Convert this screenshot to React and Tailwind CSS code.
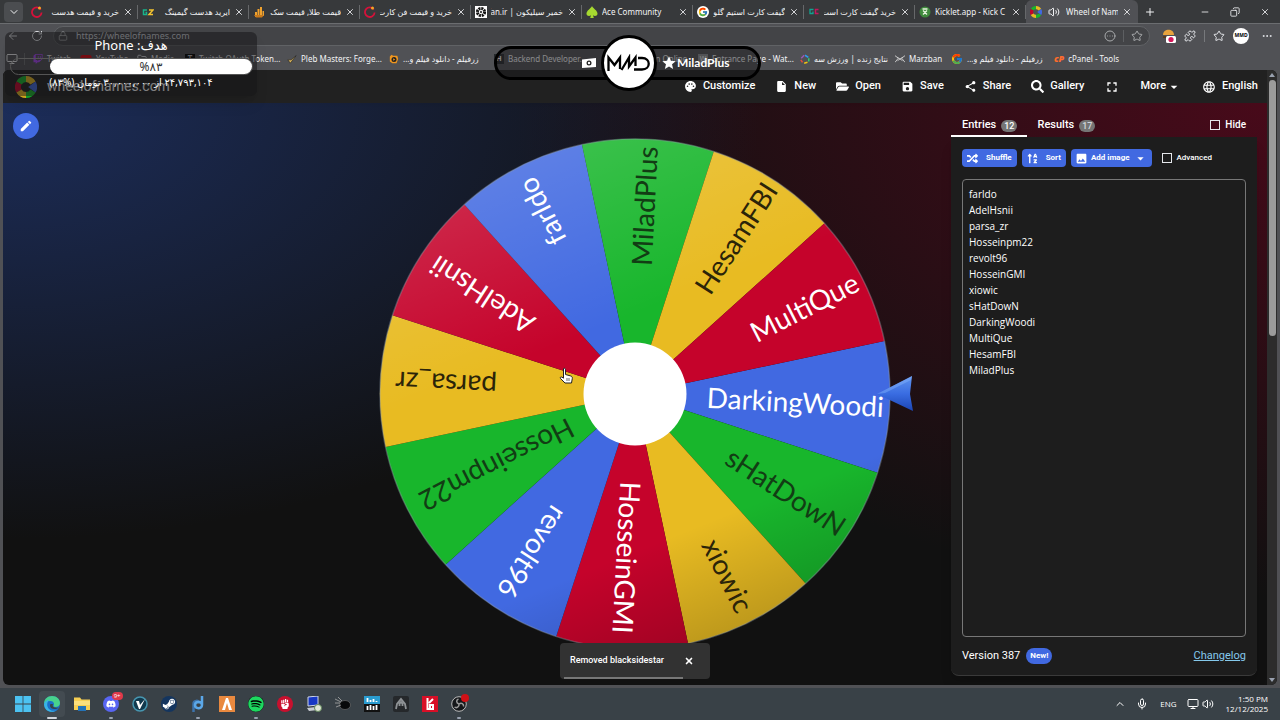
import React, { useState } from 'react';
import { FaDiscord, FaFistRaised, FaFolderOpen, FaRandom, FaSearch, FaSortAlphaUp, FaSpotify, FaSteamSymbol, FaTwitch, FaYoutube } from 'react-icons/fa';
import { FcGoogle } from 'react-icons/fc';
import { MdArrowDropDown, MdEdit, MdFullscreen, MdImage, MdInsertDriveFile, MdLanguage, MdPalette, MdSave, MdShare, MdStar } from 'react-icons/md';
import { ArrowLeft, ChevronDown, ChevronUp, CircleEllipsis, Copy, Ellipsis, Folder, Lock, Mic, Minus, Monitor, Plus, Puzzle, RotateCw, Star, Volume2, X } from 'lucide-react';

const RED = '#c5032b';
const BLUE = '#4169e1';
const GREEN = '#18b62c';
const YELLOW = '#e8bb22';

const names = [
    'farldo', 'AdelHsnii', 'parsa_zr', 'Hosseinpm22', 'revolt96', 'HosseinGMI',
    'xiowic', 'sHatDowN', 'DarkingWoodi', 'MultiQue', 'HesamFBI', 'MiladPlus'
];

// clockwise, starting from the slice under the pointer
const slices = [
    { name: 'DarkingWoodi', color: BLUE, text: '#fff', end: 249 },
    { name: 'sHatDowN', color: GREEN, text: '#123d14', end: 248 },
    { name: 'xiowic', color: YELLOW, text: '#2b2409', end: 243 },
    { name: 'HosseinGMI', color: RED, text: '#fff', end: 240 },
    { name: 'revolt96', color: BLUE, text: '#fff', end: 240 },
    { name: 'Hosseinpm22', color: GREEN, text: '#123d14', end: 240 },
    { name: 'parsa_zr', color: YELLOW, text: '#2b2409', end: 240 },
    { name: 'AdelHsnii', color: RED, text: '#fff', end: 241 },
    { name: 'farldo', color: BLUE, text: '#fff', end: 241 },
    { name: 'MiladPlus', color: GREEN, text: '#123d14', end: 248 },
    { name: 'HesamFBI', color: YELLOW, text: '#2b2409', end: 249 },
    { name: 'MultiQue', color: RED, text: '#fff', end: 249 }
];

const point = (deg, r) => {
    const a = (deg * Math.PI) / 180;
    return `${(r * Math.cos(a)).toFixed(2)} ${(r * Math.sin(a)).toFixed(2)}`;
};

const Wheel = () => (
    <svg viewBox="-256 -256 512 512" className="w-full max-w-[512px] overflow-visible">
        <defs>
            <linearGradient id="shine" x1="0.2" y1="0" x2="0.6" y2="1">
                <stop offset="0" stopColor="#fff" stopOpacity="0.18" />
                <stop offset="0.4" stopColor="#fff" stopOpacity="0" />
                <stop offset="0.8" stopColor="#000" stopOpacity="0" />
                <stop offset="1" stopColor="#000" stopOpacity="0.18" />
            </linearGradient>
            <linearGradient id="pointer" x1="0" y1="0" x2="0" y2="1">
                <stop offset="0" stopColor="#5f95ef" />
                <stop offset="0.5" stopColor="#3a6de2" />
                <stop offset="1" stopColor="#1b45b4" />
            </linearGradient>
        </defs>
        {slices.map((slice, i) => {
            const mid = 3 + i * 30;
            return <path key={slice.name} fill={slice.color} d={`M0 0L${point(mid - 15, 255)}A255 255 0 0 1 ${point(mid + 15, 255)}Z`} />;
        })}
        <circle r="255" fill="url(#shine)" />
        <circle r="255" fill="none" stroke="#8f9aa5" strokeOpacity="0.4" strokeWidth="1.5" />
        {slices.map((slice, i) => (
            <text
                key={slice.name}
                x={slice.end}
                y="10"
                textAnchor="end"
                fontSize="28"
                fill={slice.text}
                className="font-['Lato']"
                transform={`rotate(${3 + i * 30})`}
            >
                {slice.name}
            </text>
        ))}
        <circle r="51.5" fill="#fff" />
        <path d="M242 0L277 -18L275 0L278 17Z" fill="url(#pointer)" />
        <path d="M242 0L277 -18L276 -14L250 -1Z" fill="#8db8ff" fillOpacity="0.4" />
        <g transform="translate(-76 -27)">
            <path d="M4.500 1.500c1-.6 2 0 2 1v5l5 1.400c1.500.5 2 1.300 1.800 2.600l-.8 4.500H6L1.500 11.500c-.8-1 .3-2 1.500-1.300l1.500 1z" fill="#fff" stroke="#222" strokeWidth="1" />
            <path d="M8 11v3M10 11v3" stroke="#222" strokeWidth="0.7" />
        </g>
    </svg>
);

const WheelLogo = ({ className }) => (
    <svg viewBox="0 0 20 20" className={className}>
        <path d="M10 0A10 10 0 0 0 1.300 5L6 7.700A4.600 4.600 0 0 1 10 5.400Z" fill="#18b62c" />
        <path d="M1.300 5A10 10 0 0 0 1.300 15L6 12.300A4.600 4.600 0 0 1 6 7.700Z" fill="#c5032b" />
        <path d="M1.300 15A10 10 0 0 0 10 20V14.600A4.600 4.600 0 0 1 6 12.300Z" fill="#e8bb22" />
        <path d="M10 20A10 10 0 0 0 18.700 15L14 12.300A4.600 4.600 0 0 1 10 14.600Z" fill="#18b62c" />
        <path d="M10 0A10 10 0 0 1 18.700 5L14 7.700A4.600 4.600 0 0 0 10 5.400Z" fill="#e8bb22" />
        <path d="M18.700 5A10 10 0 0 1 18.700 15L12 10Z" fill="#4169e1" />
    </svg>
);

const DigiIcon = () => (
    <svg viewBox="0 0 12 12" className="size-3">
        <path d="M9.800 3.500A4.800 4.800 0 1 0 10.600 6.500" fill="none" stroke="#d4123a" strokeWidth="1.800" />
        <circle cx="8.500" cy="2" r="1.500" fill="#f5a623" />
    </svg>
);

const GzIcon = () => (
    <svg viewBox="0 0 12 12" className="size-3">
        <path d="M5 4H1.500v4.500H4.500V6.500H3.500" fill="none" stroke="#19b38b" strokeWidth="1.500" />
        <path d="M7 4h4L7 8.500h4" fill="none" stroke="#f2c230" strokeWidth="1.500" />
    </svg>
);

const BarsIcon = () => (
    <svg viewBox="0 0 12 12" className="size-3">
        <path d="M2 6h2v5H2zM4.500 3h2v8h-2zM7 1h2v10H7zM9.500 5h1.500v5H9.500z" fill="#f0a22e" />
        <path d="M1 9h10l-2 2.500H3z" fill="#c9791a" />
    </svg>
);

const FanIcon = () => (
    <svg viewBox="0 0 12 12" className="size-3">
        <rect width="12" height="12" fill="#fff" />
        <circle cx="6" cy="6" r="3.600" fill="none" stroke="#111" strokeWidth="3" strokeDasharray="2 0.800" />
        <circle cx="6" cy="6" r="1" fill="#111" />
    </svg>
);

const SpadeIcon = () => (
    <svg viewBox="0 0 12 12" className="size-3">
        <path d="M6 0C7 2.500 11.800 4.500 11.500 8c-.2 2-3 2.600-4.500 1.200L7.800 12H4.200L5 9.200C3.500 10.600.7 10 .5 8 .2 4.500 5 2.500 6 0z" fill="#a6d930" />
    </svg>
);

const GcIcon = () => (
    <svg viewBox="0 0 12 12" className="size-3">
        <path d="M5.500 3.500H2v4h3V5.500" fill="none" stroke="#12a391" strokeWidth="1.300" />
        <path d="M10.500 3.500H7.500v4h3" fill="none" stroke="#c2185b" strokeWidth="1.500" />
    </svg>
);

const KickIcon = () => (
    <svg viewBox="0 0 12 12" className="size-3">
        <circle cx="6" cy="6" r="5.500" fill="#3f8a3c" />
        <path d="M3.500 3h5M4 4.500l4 4M8 4.500l-4 4" stroke="#e8f5e0" strokeWidth="1.300" />
    </svg>
);

const FilmIcon = () => (
    <svg viewBox="0 0 12 12" className="size-2.5">
        <path d="M1 3l2-2 2 1h5l1 4-2 5H4L1 9z" fill="#f0961e" />
        <circle cx="6" cy="6.500" r="3" fill="#222" />
        <path d="M5 5l2.500 1.500L5 8z" fill="#f0961e" />
    </svg>
);

const tabs = [
    { title: 'خرید و قیمت هدست', rtl: true, icon: <DigiIcon /> },
    { title: 'ایرید هدست گیمینگ', rtl: true, icon: <GzIcon /> },
    { title: 'قیمت طلا, قیمت سک', rtl: true, icon: <BarsIcon /> },
    { title: 'خرید و قیمت فن کارت', rtl: true, icon: <DigiIcon /> },
    { title: 'خمیر سیلیکون | fan.ir', rtl: true, icon: <FanIcon /> },
    { title: 'Ace Community', icon: <SpadeIcon /> },
    { title: 'گیفت کارت استیم گلو', rtl: true, icon: <span className="flex rounded-full bg-white p-px"><FcGoogle className="size-2.5" /></span> },
    { title: 'خرید گیفت کارت است', rtl: true, icon: <GcIcon /> },
    { title: 'Kicklet.app - Kick C', icon: <KickIcon /> }
];

const bookmarks = [
    { title: 'Twitch', width: 'w-[47px]', icon: <FaTwitch className="size-2.5 text-purple-500" /> },
    { title: 'YouTube', width: 'w-[57px]', icon: <FaYoutube className="size-3 text-red-600" /> },
    { title: 'Media', width: 'w-[48px]', icon: <Folder className="size-2.5" /> },
    { title: 'Twitch OAuth Token...', width: 'w-[102px]', icon: <span className="size-2.5 bg-black text-center font-serif text-[8px] leading-[10px]">T</span> },
    {
        title: 'Pleb Masters: Forge...', width: 'w-[102px]',
        icon: <svg viewBox="0 0 12 12" className="size-2.5"><path d="M1 7l3 4 7-9-6 5z" fill="#d9b45b" stroke="#222" strokeWidth="0.800" /></svg>
    },
    { title: 'زرفیلم - دانلود فیلم و...', rtl: true, width: 'w-[105px]', icon: <FilmIcon /> },
    { title: 'Backend Developer...', width: 'w-[105px]', icon: <span className="size-2.5 bg-[#26292c] text-center text-[7px] leading-[10px] font-bold">H</span> },
    { title: 'Learn Online', width: 'w-[99px]', icon: <span className="w-9" /> },
    { title: 'Entrance Page - Wat...', width: 'w-[102px]', icon: <span className="size-2.5 bg-[#8b8d90] text-center text-[7px] leading-[10px]">W</span> },
    {
        title: 'نتایج زنده | ورزش سه', rtl: true, width: 'w-[95px]',
        icon: (
            <svg viewBox="0 0 12 12" className="size-2.5" fill="none" strokeWidth="1.800">
                <path d="M6 1.500L10 4" stroke="#2a9df4" /><path d="M10.500 5v4" stroke="#2ecc71" /><path d="M9 10l-4 1" stroke="#f1c40f" /><path d="M3 10L1 7" stroke="#e74c3c" /><path d="M1.500 5L5 1.500" stroke="#9b59b6" />
            </svg>
        )
    },
    {
        title: 'Marzban', width: 'w-[56px]',
        icon: <svg viewBox="0 0 12 12" className="size-2.5" stroke="#ddd" fill="none"><path d="M0 2l4 3-4 5M12 2L8 5l4 5M3 4l6 4M9 4L3 8" /></svg>
    },
    { title: 'زرفیلم - دانلود فیلم و...', rtl: true, width: 'w-[103px]', icon: <FcGoogle className="size-3" /> },
    { title: 'cPanel - Tools', width: 'w-[68px]', icon: <span className="text-[9px] font-black text-[#ff6c2c] italic">cP</span> }
];

const menu = [
    { label: 'Customize', Icon: MdPalette },
    { label: 'New', Icon: MdInsertDriveFile },
    { label: 'Open', Icon: FaFolderOpen },
    { label: 'Save', Icon: MdSave },
    { label: 'Share', Icon: MdShare },
    { label: 'Gallery', Icon: FaSearch }
];

const BrowserTabs = () => (
    <div className="flex h-[23px] items-center bg-[#37393b] text-[8px] text-gray-100">
        <button aria-label="Tab actions" className="ml-1 flex h-5 w-[19px] shrink-0 items-center justify-center rounded bg-[#4b4d50]">
            <ChevronDown className="size-3" />
        </button>
        <div className="flex h-full min-w-0 flex-1 items-center pl-1">
            {tabs.map((tab, i) => (
                <div key={i} className="flex h-3.5 w-[111px] shrink items-center border-r border-[#66686a] pr-1 pl-1">
                    <span className="shrink-0">{tab.icon}</span>
                    <span dir={tab.rtl ? 'rtl' : 'ltr'} className="mr-1 ml-1 min-w-0 flex-1 overflow-hidden whitespace-nowrap">{tab.title}</span>
                    <X className="size-2.5 shrink-0" />
                </div>
            ))}
            <div className="flex h-full w-[112px] shrink items-center rounded-t-md bg-[#505155] pr-1.5 pl-1">
                <WheelLogo className="size-3 shrink-0" />
                <Volume2 className="ml-1.5 size-3 shrink-0" />
                <span className="mr-1 ml-1.5 min-w-0 flex-1 overflow-hidden whitespace-nowrap">Wheel of Nam</span>
                <X className="size-2.5 shrink-0" />
            </div>
            <Plus className="ml-1.5 size-3 shrink-0" />
        </div>
        <div className="flex gap-5 pr-2.5">
            <Minus className="size-2.5" />
            <Copy className="size-2.5 -scale-x-100" />
            <X className="size-2.5" />
        </div>
    </div>
);

const AddressBar = () => (
    <div className="flex h-6 items-center gap-2 border-t border-[#6b6d70] bg-[#505155] px-[7px] text-gray-200">
        <ArrowLeft className="size-3" />
        <RotateCw className="ml-1 size-3" />
        <div className="mr-1 ml-0.5 flex h-5 flex-1 items-center rounded-full border border-[#606265] bg-[#434447] pr-1.5 pl-1 text-[#a9abad]">
            <Lock className="size-2.5" />
            <input aria-label="Address" readOnly value="https://wheelofnames.com" className="ml-2 flex-1 text-[9px] leading-4 text-gray-300 outline-none" />
            <CircleEllipsis className="size-3" />
            <div className="mx-[7px] h-3 w-px bg-[#5d5f62]" />
            <Star className="size-3" />
        </div>
        <svg viewBox="0 0 14 14" className="size-3.5">
            <path d="M1 6c0-7 11-7 11 0z" fill="#e8a33c" /><path d="M1 7h11v2H1z" fill="#5c3a1c" />
            <rect x="4" y="7" width="10" height="7" rx="1.500" fill="#fff" /><circle cx="9" cy="10.500" r="2.600" fill="#d6185a" />
        </svg>
        <Puzzle className="size-3" />
        <div className="h-3 w-px bg-[#77797c]" />
        <Star className="size-3" />
        <span className="flex size-4 items-center justify-center rounded-full bg-white text-[5px] font-bold text-black">MMD</span>
        <Ellipsis className="ml-1 size-3" />
    </div>
);

const Bookmarks = () => (
    <div className="flex h-[23px] items-center overflow-hidden bg-[#505155] text-[8px] text-gray-100">
        <Monitor className="ml-1.5 size-3 shrink-0" />
        <div className="mr-2 ml-1.5 h-3 w-px shrink-0 bg-[#6f7174]" />
        {bookmarks.map((b, i) => (
            <a key={i} href="#" className={`flex shrink-0 items-center gap-1 overflow-hidden whitespace-nowrap ${b.width}`}>
                <span className="flex shrink-0">{b.icon}</span>
                <span dir={b.rtl ? 'rtl' : 'ltr'}>{b.title}</span>
            </a>
        ))}
    </div>
);

const DonationGoal = () => (
    <div className="absolute top-8 left-[5px] flex h-16 w-[252px] flex-col items-center rounded-md bg-[#1515178c] text-white shadow-lg" dir="rtl">
        <p className="mt-1 text-[13px] leading-[18px]">هدف: Phone</p>
        <div className="mt-1 h-[17px] w-full pl-[5px] pr-1">
            <div className="h-full w-full rounded-full border border-[#555]">
                <p className="h-full w-[202px] rounded-full bg-white text-center text-[12px] leading-4 text-[#333]">%۸۳</p>
            </div>
        </div>
        <p className="text-[10px] leading-[14px]">۲۴,۷۹۳,۱۰۴ از ۳۰,۰۰۰,۰۰۰ تومان (%۸۳)</p>
    </div>
);

const StreamerTag = () => (
    <div className="absolute top-[46px] left-1/2 flex h-[34px] w-[267px] -translate-x-[146px] items-center rounded-full border-[3px] border-black bg-[#1a1a1c80] text-white">
        <svg viewBox="0 0 14 10" className="ml-[85px] h-2.5 w-3.5">
            <path d="M0 1.500L14 0v9L0 10z" fill="#fff" />
            <circle cx="7" cy="5" r="2.500" fill="#222" /><circle cx="7" cy="5" r="1.200" fill="#fff" />
        </svg>
        <div className="ml-[5px] flex size-[56px] shrink-0 items-center justify-center rounded-full border-[3px] border-black bg-white">
            <svg viewBox="0 0 44 18" className="w-11" fill="none" stroke="#000" strokeWidth="2.300">
                <path d="M1.500 17V3.500l6 7.500 5.500-7.500V15" />
                <path d="M14.500 16L22 3.500v9l6.500-9V12" />
                <path d="M27 15.500h8c9 0 9-11.500 0-11.500h-4" />
            </svg>
        </div>
        <MdStar className="ml-1 size-4" />
        <span className="font-['Lato'] text-[12px] font-bold">MiladPlus</span>
    </div>
);

const PageHeader = () => (
    <header className="flex h-[33px] items-center bg-[#212121] pr-[9px] pl-3 font-['Roboto'] text-white shadow">
        <WheelLogo className="size-[22px]" />
        <span className="ml-2.5 text-[14px]">wheelofnames.com</span>
        <nav className="ml-auto flex items-center gap-5 text-[11px] font-medium">
            {menu.map(({ label, Icon }) => (
                <button key={label} className="flex items-center gap-1.5">
                    <Icon className="size-[13px]" />
                    {label}
                </button>
            ))}
            <button aria-label="Fullscreen"><MdFullscreen className="size-4" /></button>
            <button className="flex items-center">More<MdArrowDropDown className="size-4" /></button>
            <button className="flex items-center gap-1.5"><MdLanguage className="size-[14px]" />English</button>
        </nav>
    </header>
);

const EntriesPanel = () => {
    const [text, setText] = useState(names.join('\n'));

    return (
        <aside className="mr-2.5 flex w-[306px] flex-col justify-self-end pt-[9px] pb-[9px] font-['Roboto'] text-white">
            <div className="flex h-[25px] items-center text-[11px] font-medium">
                <button className="flex h-full items-center gap-[5px] border-b-2 border-white pt-1 pr-2.5 pl-[11px]">
                    Entries <span className="rounded-full bg-[#757575] px-[3px] text-[9px] leading-3">12</span>
                </button>
                <button className="flex h-full items-center gap-[5px] border-b-2 border-transparent px-2.5 pt-1">
                    Results <span className="rounded-full bg-[#757575] px-[3px] text-[9px] leading-3 text-gray-300">17</span>
                </button>
                <label className="mr-[11px] ml-auto flex items-center gap-[5px] text-[10px]">
                    <input type="checkbox" className="size-2.5 appearance-none border border-gray-200" />Hide
                </label>
            </div>
            <div className="flex flex-1 flex-col rounded-b-lg border-b border-[#3a3a3a] bg-[#1d1d1d] px-[11px] shadow-lg">
                <div className="flex items-center gap-[5px] py-3 text-[8px] font-bold">
                    <button className="flex h-[18px] items-center gap-2 rounded-sm bg-[#4169e1] px-[5px]"><FaRandom className="size-[11px]" />Shuffle</button>
                    <button className="flex h-[18px] items-center gap-2 rounded-sm bg-[#4169e1] px-[5px]"><FaSortAlphaUp className="size-[11px]" />Sort</button>
                    <button className="flex h-[18px] items-center gap-[3px] rounded-sm bg-[#4169e1] px-1"><MdImage className="size-[13px]" />Add image<MdArrowDropDown className="size-[15px]" /></button>
                    <label className="ml-[5px] flex items-center gap-[5px] font-medium">
                        <input type="checkbox" className="size-2.5 appearance-none border border-gray-200" />Advanced
                    </label>
                </div>
                <textarea
                    aria-label="Entries"
                    value={text}
                    spellCheck={false}
                    onChange={(e) => setText(e.target.value)}
                    className="w-full flex-1 resize-none rounded-sm border border-[#777] px-1.5 py-1.5 font-['Open_Sans'] text-[10px] leading-4 outline-none"
                />
                <div className="flex h-[38px] items-center text-[11px]">
                    Version 387
                    <span className="ml-1.5 rounded-full bg-[#4169e1] px-1 text-[8px] leading-4 font-bold">New!</span>
                    <a href="#" className="ml-auto text-[#85c9ec] underline">Changelog</a>
                </div>
            </div>
        </aside>
    );
};

const Toast = () => (
    <div className="absolute bottom-1.5 left-1/2 flex h-9 w-[150px] -translate-x-[75px] items-center rounded bg-[#323232] px-2.5 font-['Roboto'] text-[9px] font-medium text-white">
        Removed blacksidestar
        <button aria-label="Dismiss" className="mr-1.5 ml-auto"><X className="size-2.5" strokeWidth={4} /></button>
        <div className="absolute bottom-0 left-1 h-0.5 w-[119px] bg-[#777]" />
    </div>
);

const taskIcons = [
    {
        name: 'Start',
        icon: <svg viewBox="0 0 16 16" className="size-4"><path d="M0 0h7.600v7.600H0zM8.400 0H16v7.600H8.400zM0 8.400h7.600V16H0zM8.400 8.400H16V16H8.400z" fill="#4cc2f1" /></svg>
    },
    {
        name: 'Edge', active: true,
        icon: (
            <svg viewBox="0 0 16 16" className="size-4">
                <circle cx="8" cy="8" r="8" fill="#1b6fc9" />
                <path d="M0 8C0 3 3.500 0 8 0c5 0 8 3.500 8 7 0 2.500-2 4-4.500 4-2 0-2.500-1-1.500-2 .5-2.500-1.500-4-4-4C3.500 5 1 6 0 8z" fill="#48d18c" />
                <path d="M0 8c1-3 3.500-4.500 6-4.500C3 5 2 10 5 13c2 2 5 2.500 8 1-4 3.500-13 2-13-6z" fill="#39b4e6" />
                <path d="M6.500 8c-1.500 2 .5 5 3.500 5 2 0 3.500-.5 4.500-1.500-2 .5-4 .3-5-.5-1-1-1-2-.5-3z" fill="#3a4247" />
            </svg>
        )
    },
    {
        name: 'Files',
        icon: <svg viewBox="0 0 16 16" className="size-4"><path d="M0 1.500h6l1.500 2H16V14H0z" fill="#f7cf53" /><path d="M0 5h16v4H0z" fill="#fbdf7c" /><path d="M4 10h8v5H4z" fill="#2473b8" /></svg>
    },
    {
        name: 'Discord', running: true,
        icon: (
            <span className="relative flex size-4 items-center justify-center rounded-full bg-[#5865f2]">
                <FaDiscord className="size-2.5" />
                <span className="absolute -top-1 -right-1 rounded-full bg-[#e0394a] px-0.5 text-[6px] leading-[8px]">9+</span>
            </span>
        )
    },
    {
        name: 'V',
        icon: <svg viewBox="0 0 16 16" className="size-4"><circle cx="8" cy="8" r="7" fill="#12394d" stroke="#4796b0" strokeWidth="1.500" /><path d="M4 5h3l1 4 5-6-5 10H7z" fill="#fff" /></svg>
    },
    { name: 'Steam', icon: <span className="flex size-4 items-center justify-center rounded-full bg-[#14355f]"><FaSteamSymbol className="size-3.5" /></span> },
    {
        name: 'P', running: true,
        icon: <svg viewBox="0 0 16 16" className="size-4" fill="none" strokeWidth="2.500"><path d="M3.500 16V8c0-4 5-4 6-1" stroke="#3c73ad" /><path d="M12 0v9c0 4.500-7 4-7 0 0-4 7-4 7 0" stroke="#5ba7e8" /></svg>
    },
    {
        name: 'FiveM',
        icon: <svg viewBox="0 0 16 16" className="size-4"><path d="M0 0h16v16H0z" fill="#e9893f" /><path d="M3 14L7 2h2l4 12h-3L8 7l-2 7z" fill="#fff" /></svg>
    },
    { name: 'Spotify', running: true, icon: <span className="flex size-4 items-center justify-center rounded-full bg-black"><FaSpotify className="size-4 text-[#1ed760]" /></span> },
    { name: 'Fist', icon: <span className="flex size-4 items-center justify-center rounded-full bg-[#c8102e]"><FaFistRaised className="size-2.5" /></span> },
    {
        name: 'Remote',
        icon: <svg viewBox="0 0 16 16" className="size-4"><path d="M2 1l10-1v9L2 10z" fill="#1737c4" stroke="#cfd6e6" /><path d="M1 12l9-1 2 3-9 1z" fill="#c8ccd2" /><circle cx="12" cy="12" r="3.500" fill="#e2e8d8" stroke="#62885b" /></svg>
    },
    {
        name: 'Bug',
        icon: <svg viewBox="0 0 16 16" className="size-4"><ellipse cx="10" cy="9" rx="5.500" ry="4.500" fill="#08090a" stroke="#777" strokeWidth="0.600" /><path d="M0 3l6 3M0 7h5M1 11l5-2M3 1l4 4" stroke="#aaa" strokeWidth="0.800" /></svg>
    },
    {
        name: 'Mixer',
        icon: <svg viewBox="0 0 16 16" className="size-4"><path d="M0 0h16v8H0z" fill="#2a9cd0" /><path d="M0 8h16v8H0z" fill="#111" /><path d="M3.500 2v4M6.500 4v2M9.500 3v3M12.500 5v1M3.500 10v4M6.500 9v5M9.500 10v4M12.500 9v5" stroke="#fff" strokeWidth="1.800" /></svg>
    },
    {
        name: 'Arc',
        icon: <svg viewBox="0 0 16 16" className="size-4"><rect width="16" height="16" rx="2" fill="#25282b" /><path d="M3 13l1-5 4-5 4 5 1 5M6.500 10V7.500L8 6l1.500 1.500V10" fill="none" stroke="#8e9295" strokeWidth="1.800" /></svg>
    },
    {
        name: 'Red',
        icon: <svg viewBox="0 0 16 16" className="size-4"><path d="M0 0h16v16H0z" fill="#d80f27" /><path d="M5.500 2v11H8M8 9h3v4H8zM11 3L7 7" fill="none" stroke="#fff" strokeWidth="2" /></svg>
    },
    {
        name: 'OBS', running: true,
        icon: (
            <svg viewBox="0 0 16 16" className="size-4 overflow-visible">
                <circle cx="8" cy="8" r="7.300" fill="#15171a" stroke="#bbb" />
                <path d="M8 8c-3-1-3-4-.5-5M8 8c2.500-2 5 0 4.500 2.500M8 8c.5 3-2.500 4.500-4.500 3" fill="none" stroke="#999" strokeWidth="1.500" />
                <circle cx="14" cy="2" r="4" fill="#d01016" />
            </svg>
        )
    }
];

const Taskbar = () => (
    <footer className="flex h-8 shrink-0 items-center bg-[#394147] pr-3 pl-2 font-['Open_Sans'] text-white">
        <div className="flex h-full items-center">
            {taskIcons.map((item) => (
                <button
                    key={item.name}
                    aria-label={item.name}
                    className={`relative mx-[2px] flex h-[26px] items-center justify-center rounded ${item.active ? 'w-[26px] bg-[#434b51]' : 'w-[25px]'}`}
                >
                    {item.icon}
                    {item.active && <span className="absolute -bottom-0.5 h-0.5 w-2.5 rounded bg-gray-300" />}
                    {item.running && <span className="absolute -bottom-0.5 h-0.5 w-1 rounded bg-gray-400" />}
                </button>
            ))}
        </div>
        <div className="ml-auto flex items-center text-[8px]">
            <ChevronUp className="mr-2.5 size-3" />
            <Mic className="mr-3 size-3" />
            ENG
            <Monitor className="ml-2.5 size-3" />
            <Volume2 className="mr-3 ml-[3px] size-3" />
            <div className="text-right leading-[10px]">
                <p>1:50 PM</p>
                <p>12/12/2025</p>
            </div>
        </div>
    </footer>
);

const App = () => {
    return (
        <div className="relative flex h-screen flex-col overflow-hidden bg-[#505155] font-['Noto_Sans','DejaVu_Sans',sans-serif]">
            <BrowserTabs />
            <AddressBar />
            <Bookmarks />
            <div className="mr-[3px] mb-[3px] ml-[3px] flex min-h-0 flex-1 overflow-hidden rounded-md bg-[#111]">
                <div className="flex min-w-0 flex-1 flex-col">
                    <PageHeader />
                    <main className="relative grid min-h-0 flex-1 grid-cols-[1fr_512px_1fr] bg-[radial-gradient(ellipse_60%_75%_at_0%_0%,#1c2d5a,transparent),radial-gradient(ellipse_60%_85%_at_100%_0%,#480a1a,transparent)]">
                        <div className="p-2.5">
                            <button aria-label="Edit title" className="flex size-[26px] items-center justify-center rounded-full bg-[#4169e1] text-white">
                                <MdEdit className="size-3.5" />
                            </button>
                        </div>
                        <div className="flex items-center justify-center"><Wheel /></div>
                        <EntriesPanel />
                        <Toast />
                    </main>
                </div>
                <div className="flex w-[10px] flex-col items-center justify-between bg-[#2c2c2c] py-[3px]">
                    <div className="flex h-full flex-col items-center gap-[3px]">
                        <div className="border-x-[3px] border-b-4 border-x-transparent border-b-gray-400" />
                        <div className="h-[256px] w-[7px] rounded-full bg-[#9b9b9b]" />
                    </div>
                    <div className="border-x-[3px] border-t-4 border-x-transparent border-t-gray-400" />
                </div>
            </div>
            <Taskbar />
            <DonationGoal />
            <StreamerTag />
        </div>
    );
};

export default App;
